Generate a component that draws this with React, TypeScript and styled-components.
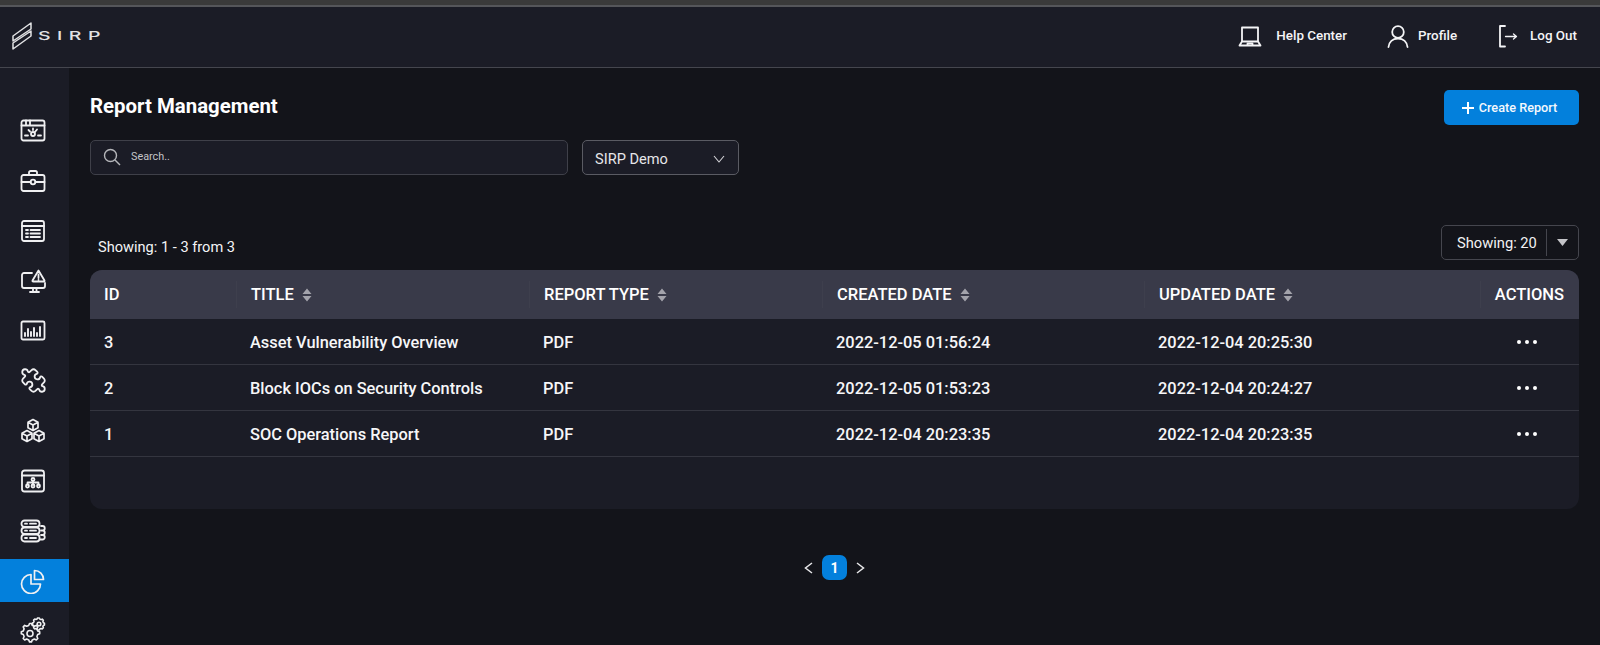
import styled, { createGlobalStyle } from "styled-components";
import { Puzzle } from "lucide-react";
import type { ReactNode } from "react";

const GlobalStyle = createGlobalStyle`
  html, body {
    margin: 0;
    padding: 0;
    background: #13141a;
  }
  * {
    box-sizing: border-box;
  }
`;

const Page = styled.div`
  width: 1600px;
  height: 645px;
  overflow: hidden;
  display: flex;
  flex-direction: column;
  background: #13141a;
  color: #f4f4f6;
  font-family: Roboto, "Liberation Sans", sans-serif;
`;

const TopStrip = styled.div`
  height: 7px;
  flex: none;
  background: #3a3a3a;
  border-bottom: 2px solid #55565a;
`;

const Header = styled.header`
  height: 61px;
  flex: none;
  display: flex;
  align-items: center;
  justify-content: space-between;
  padding: 0 23px 3px 12px;
  background: #1b1c26;
  border-bottom: 1px solid #45464e;
`;

const Logo = styled.div`
  display: flex;
  align-items: center;
  gap: 6px;
  color: #e2e2e4;
`;

const LogoWord = styled.span`
  font-family: Inter, Roboto, sans-serif;
  font-size: 12px;
  font-weight: 500;
  letter-spacing: 4px;
  transform: scaleX(1.62);
  transform-origin: left center;
`;

const HeaderNav = styled.nav`
  display: flex;
  align-items: center;
`;

const HeaderLink = styled.a<{ $gap: number; $left: number }>`
  display: flex;
  align-items: center;
  gap: ${(p) => p.$gap}px;
  margin-left: ${(p) => p.$left}px;
  font-size: 13.4px;
  font-weight: 500;
  color: #f4f4f6;
`;

const Body = styled.div`
  flex: 1;
  min-height: 0;
  display: flex;
`;

const Sidebar = styled.aside`
  width: 69px;
  flex: none;
  display: flex;
  flex-direction: column;
  gap: 7px;
  padding-top: 41px;
  background: #1b1c26;
`;

const SideItem = styled.div<{ $active?: boolean }>`
  height: 43px;
  flex: none;
  display: flex;
  align-items: center;
  justify-content: center;
  padding-right: 3px;
  color: #f0f0f2;
  background: ${(p) => (p.$active ? "#0380dc" : "transparent")};
`;

const PuzzleIcon = styled(Puzzle)`
  transform: scaleX(-1);
`;

const Main = styled.main`
  flex: 1;
  min-width: 0;
  padding: 22px 21px 0;
`;

const TitleRow = styled.div`
  display: flex;
  align-items: flex-start;
  justify-content: space-between;
`;

const Title = styled.h1`
  margin: 4px 0 0;
  font-size: 20.4px;
  line-height: 24px;
  font-weight: 700;
  color: #fff;
`;

const CreateButton = styled.button`
  width: 135px;
  height: 35px;
  display: flex;
  align-items: center;
  justify-content: center;
  gap: 5px;
  padding: 0 4px 0 0;
  border: 0;
  border-radius: 5px;
  background: #0380dc;
  color: #f4f8fc;
  font-family: inherit;
  font-size: 12.7px;
  font-weight: 500;
`;

const Filters = styled.div`
  display: flex;
  gap: 14px;
  margin-top: 15px;
`;

const SearchBox = styled.div`
  width: 478px;
  height: 35px;
  display: flex;
  align-items: center;
  gap: 10px;
  padding: 0 12px 2px;
  background: #1b1c26;
  border: 1px solid #3f4049;
  border-radius: 5px;
  font-size: 10.8px;
  color: #c3c4c8;
`;

const SelectBox = styled.div`
  width: 157px;
  height: 35px;
  display: flex;
  align-items: center;
  justify-content: space-between;
  padding: 3px 13px 0 12px;
  background: #1b1c26;
  border: 1px solid #5a5b63;
  border-radius: 5px;
  font-size: 14.6px;
  color: #e6e6e9;
`;

const ListBar = styled.div`
  display: flex;
  align-items: center;
  justify-content: space-between;
  margin-top: 50px;
`;

const Count = styled.span`
  margin: 8px 0 0 8px;
  font-size: 14.6px;
  font-weight: 400;
  color: #f4f4f6;
`;

const PageSize = styled.div`
  width: 138px;
  height: 35px;
  display: flex;
  align-items: center;
  padding: 3px 0;
  border: 1px solid #45464e;
  border-radius: 5px;
  font-size: 14.7px;
`;

const PageSizeLabel = styled.span`
  flex: 1;
  padding-left: 15px;
  color: #f2f2f4;
`;

const PageSizeToggle = styled.span`
  width: 32px;
  height: 100%;
  display: flex;
  align-items: center;
  justify-content: center;
  border-left: 1px solid #45464e;
`;

const Table = styled.div`
  height: 239px;
  margin-top: 10px;
  background: #1b1c26;
  border-radius: 12px;
  overflow: hidden;
`;

const columns = "146px 293px 293px 322px 336px 99px";

const HeadRow = styled.div`
  height: 49px;
  display: grid;
  grid-template-columns: ${columns};
  align-items: center;
  background: #393a49;
`;

const HeadCell = styled.div<{ $end?: boolean }>`
  height: 27px;
  display: flex;
  align-items: center;
  justify-content: ${(p) => (p.$end ? "flex-end" : "flex-start")};
  gap: 8px;
  padding: ${(p) => (p.$end ? "0 15px 0 0" : "0 0 0 14px")};
  border-left: 1px solid #3e3f4d;
  font-size: 16.5px;
  font-weight: 500;
  color: #fff;
  white-space: nowrap;
  &:first-child {
    border-left: 0;
  }
`;

const Row = styled.div`
  height: 46px;
  display: grid;
  grid-template-columns: ${columns};
  align-items: center;
  padding-top: 1px;
  border-bottom: 1px solid #34353f;
`;

const Cell = styled.div`
  padding-left: 14px;
  font-size: 16.4px;
  font-weight: 500;
  color: #f6f6f8;
  white-space: nowrap;
`;

const ActionCell = styled.div`
  display: flex;
  justify-content: center;
  padding-right: 5px;
`;

const Dots = styled.span`
  display: flex;
  gap: 4px;
`;

const Dot = styled.i`
  width: 4px;
  height: 4px;
  border-radius: 50%;
  background: #fff;
`;

const Pagination = styled.div`
  display: flex;
  align-items: center;
  justify-content: center;
  gap: 9px;
  margin-top: 46px;
`;

const PageNumber = styled.span`
  width: 25px;
  height: 25px;
  display: flex;
  align-items: center;
  justify-content: center;
  border-radius: 7px;
  background: #0380dc;
  font-size: 14px;
  font-weight: 700;
  color: #fff;
`;

type IconProps = { size?: number; height?: number; children: ReactNode; stroke?: number };

const Line = ({ size = 26, height, children, stroke = 1.8 }: IconProps) => (
  <svg
    width={size}
    height={height ?? size}
    viewBox={`0 0 ${size} ${height ?? size}`}
    fill="none"
    stroke="currentColor"
    strokeWidth={stroke}
    strokeLinecap="round"
    strokeLinejoin="round"
  >
    {children}
  </svg>
);

const sideIcons: ReactNode[] = [
  <Line key="dash" size={26} height={24}>
    <rect x="1.5" y="1.5" width="23" height="20" rx="2" />
    <path d="M1.5 6.5h23M6 1.5v5M10 1.5v5" />
    <circle cx="13" cy="15" r="2" />
    <path d="M14.5 13.5l2.5-3M13 9.5v1.5M8.5 11l1.5 1.5M5 16.5h3M18 16.5h3" />
  </Line>,
  <Line key="case" size={26} height={24}>
    <path d="M9 6V3.6A1.6 1.6 0 0 1 10.6 2h4.8A1.6 1.6 0 0 1 17 3.6V6" />
    <rect x="1.5" y="6" width="23" height="16" rx="2" />
    <path d="M1.5 13h9M15.5 13h9" />
    <circle cx="13" cy="13" r="2.3" />
  </Line>,
  <Line key="list" size={26} height={24}>
    <rect x="2" y="2" width="22" height="20" rx="2" />
    <path d="M2 7h22M6 11h2M6 14.5h2M6 18h2M10.5 11H20M10.5 14.5H20M10.5 18H20" />
  </Line>,
  <Line key="alert" size={26} height={24}>
    <path d="M12 4H4a2 2 0 0 0-2 2v11a2 2 0 0 0 2 2h19a2 2 0 0 0 2-2v-3" />
    <path d="M10 23h9M13 19.5V23M16.5 19.5V23" />
    <path d="M18.5 1.5l6 10a.6.6 0 0 1-.5 1H13a.6.6 0 0 1-.5-1z" />
    <path d="M18.5 5.5V9M18.5 10.8v.2" />
  </Line>,
  <Line key="bars" size={26} height={22}>
    <rect x="1.5" y="1.5" width="23" height="18" rx="1.5" />
    <path d="M5 16v-3M8 16V9M11 16v-4M14 16V8M17 16v-3M20 16V7" strokeWidth={1.9} />
  </Line>,
  <PuzzleIcon key="puzzle" size={27} strokeWidth={1.6} />,
  <Line key="cubes" size={26} height={26} stroke={1.7}>
    <path d="M13 1.5l5 2.8v5.4l-5 2.8-5-2.8V4.3zM8 4.3l5 2.8 5-2.8M13 7.1v5.4" />
    <path d="M7 12.5l5 2.8v5.4l-5 2.8-5-2.8v-5.4zM2 15.3l5 2.8 5-2.8M7 18.1v5.4" />
    <path d="M19 12.5l5 2.8v5.4l-5 2.8-5-2.8v-5.4zM14 15.3l5 2.8 5-2.8M19 18.1v5.4" />
  </Line>,
  <Line key="flow" size={26} height={24}>
    <rect x="2" y="1.5" width="22" height="21" rx="2.5" />
    <path d="M2 6.5h22" />
    <circle cx="13" cy="10.5" r="1.5" />
    <circle cx="7.5" cy="17" r="1.5" />
    <circle cx="13" cy="17" r="1.5" />
    <circle cx="18.5" cy="17" r="1.5" />
    <path d="M13 12v3.5M7.5 15.5v-2h11v2" />
  </Line>,
  <Line key="db" size={26} height={24}>
    <rect x="1.5" y="1.5" width="18" height="6.5" rx="3" />
    <rect x="1.5" y="8.5" width="18" height="6.5" rx="3" />
    <rect x="1.5" y="15.5" width="18" height="7" rx="3" />
    <path d="M5 4.7h2M5 11.7h2M5 19h2M10 4.7h6M10 11.7h6M10 19h6M21 7h1.5a2 2 0 0 1 0 4.5H21M21 11.5h1.5a2 2 0 0 1 0 4.5H21M21 16h1.5a2 2 0 0 1 0 4.5H20" />
  </Line>,
  <Line key="pie" size={26} height={26} stroke={1.7}>
    <path d="M11 6.5a9.500 9.500 0 1 0 9.5 9.5H11z" />
    <path d="M14.5 2.5a9 9 0 0 1 9 9h-9z" />
  </Line>,
  <Line key="gears" size={28} height={28} stroke={1.6}>
    <path d="M11 9.5l1.5 0 .8 2 2 .8 2-.9 1.5 1.5-.9 2 .8 2 2 .8v2l-2 .8-.8 2 .9 2-1.5 1.5-2-.9-2 .8-.8 2h-2l-.8-2-2-.8-2 .9-1.5-1.5.9-2-.8-2-2-.8v-2l2-.8.8-2-.9-2 1.5-1.5 2 .9 2-.8.8-2z" transform="translate(0 -3)" />
    <circle cx="11" cy="16.5" r="3" />
    <path d="M20.5 1.5h1.8l.5 1.2 1.2.5 1.2-.5 1.2 1.2-.5 1.2.5 1.2 1.1.5v1.8l-1.1.5-.5 1.2.5 1.2-1.2 1.2-1.2-.5-1.2.5-.5 1.100h-1.800l-.5-1.100-1.200-.5-1.200.5-1.200-1.200.5-1.200-.5-1.200-1.100-.5V6.600l1.100-.5.5-1.200-.5-1.200 1.200-1.200 1.200.5 1.200-.5z" transform="translate(-1.5 -.5) scale(.98)" />
    <circle cx="20" cy="7" r="1.8" />
  </Line>,
];

const SortIcon = () => (
  <svg width="10" height="14" viewBox="0 0 10 14" fill="#a3a3ab">
    <path d="M5 0.5l4.500 5.500h-9zM5 13.500l4.500-5.500h-9z" />
  </svg>
);

const Chevron = ({ dir }: { dir: "left" | "right" }) => (
  <svg width="9" height="12" viewBox="0 0 9 12" fill="none" stroke="#e8e8ea" strokeWidth="1.5">
    <path d={dir === "left" ? "M8 1L1.500 6 8 11" : "M1 1l6.500 5L1 11"} />
  </svg>
);

const reports = [
  { id: 3, title: "Asset Vulnerability Overview", created: "2022-12-05 01:56:24", updated: "2022-12-04 20:25:30" },
  { id: 2, title: "Block IOCs on Security Controls", created: "2022-12-05 01:53:23", updated: "2022-12-04 20:24:27" },
  { id: 1, title: "SOC Operations Report", created: "2022-12-04 20:23:35", updated: "2022-12-04 20:23:35" },
];

const App = () => {
  return (
    <Page>
      <GlobalStyle />
      <TopStrip />
      <Header>
        <Logo>
          <svg width="20" height="28" viewBox="0 0 20 28" fill="none" stroke="currentColor" strokeWidth="1.5" strokeLinejoin="round">
            <path d="M19 1L1 14v5L19 7zM1 27l18-13V9L1 21z" />
          </svg>
          <LogoWord>SIRP</LogoWord>
        </Logo>
        <HeaderNav>
          <HeaderLink $gap={14} $left={0}>
            <Line size={24} height={22}>
              <path d="M4 2.500h16v14H4zM1.500 20.500L4 16.500M22.500 20.500L20 16.500M1.500 20.500h21" />
              <path d="M9.500 20v-1.500h5V20" />
            </Line>
            Help Center
          </HeaderLink>
          <HeaderLink $gap={9} $left={40}>
            <Line size={22} height={24}>
              <circle cx="11" cy="8" r="5.8" />
              <path d="M1.500 23c.5-5 4-8.500 9.500-8.500s9 3.500 9.500 8.500" />
            </Line>
            Profile
          </HeaderLink>
          <HeaderLink $gap={12} $left={41}>
            <Line size={20} height={24}>
              <path d="M7 2H2v20.500h5" />
              <path d="M7.500 12.500h11M15.500 10l3 2.500-3 2.500" strokeWidth={1.3} />
            </Line>
            Log Out
          </HeaderLink>
        </HeaderNav>
      </Header>
      <Body>
        <Sidebar>
          {sideIcons.map((icon, i) => (
            <SideItem key={i} $active={i === 9}>
              {icon}
            </SideItem>
          ))}
        </Sidebar>
        <Main>
          <TitleRow>
            <Title>Report Management</Title>
            <CreateButton>
              <svg width="12" height="12" viewBox="0 0 12 12" stroke="#fff" strokeWidth="2">
                <path d="M6 0v12M0 6h12" />
              </svg>
              Create Report
            </CreateButton>
          </TitleRow>
          <Filters>
            <SearchBox>
              <svg width="18" height="18" viewBox="0 0 18 18" fill="none" stroke="#b5b6ba" strokeWidth="1.4">
                <circle cx="7.500" cy="7.500" r="6" />
                <path d="M12 12l5 5" />
              </svg>
              Search..
            </SearchBox>
            <SelectBox>
              SIRP Demo
              <svg width="12" height="8" viewBox="0 0 12 8" fill="none" stroke="#d5d5d9" strokeWidth="1.1">
                <path d="M1 1l5 6 5-6" />
              </svg>
            </SelectBox>
          </Filters>
          <ListBar>
            <Count>Showing: 1 - 3 from 3</Count>
            <PageSize>
              <PageSizeLabel>Showing: 20</PageSizeLabel>
              <PageSizeToggle>
                <svg width="11" height="7" viewBox="0 0 11 7" fill="#c4c4c8">
                  <path d="M0 0h11L5.500 7z" />
                </svg>
              </PageSizeToggle>
            </PageSize>
          </ListBar>
          <Table>
            <HeadRow>
              <HeadCell>ID</HeadCell>
              <HeadCell>
                TITLE <SortIcon />
              </HeadCell>
              <HeadCell>
                REPORT TYPE <SortIcon />
              </HeadCell>
              <HeadCell>
                CREATED DATE <SortIcon />
              </HeadCell>
              <HeadCell>
                UPDATED DATE <SortIcon />
              </HeadCell>
              <HeadCell $end>ACTIONS</HeadCell>
            </HeadRow>
            {reports.map((r) => (
              <Row key={r.id}>
                <Cell>{r.id}</Cell>
                <Cell>{r.title}</Cell>
                <Cell>PDF</Cell>
                <Cell>{r.created}</Cell>
                <Cell>{r.updated}</Cell>
                <ActionCell>
                  <Dots>
                    <Dot />
                    <Dot />
                    <Dot />
                  </Dots>
                </ActionCell>
              </Row>
            ))}
          </Table>
          <Pagination>
            <Chevron dir="left" />
            <PageNumber>1</PageNumber>
            <Chevron dir="right" />
          </Pagination>
        </Main>
      </Body>
    </Page>
  );
};

export default App;
